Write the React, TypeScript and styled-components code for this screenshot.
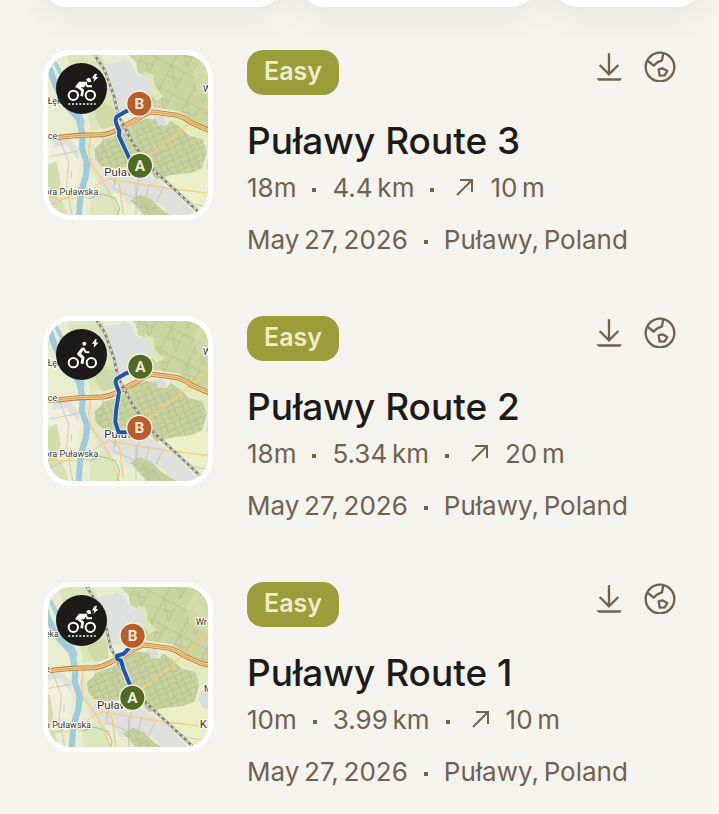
import { useId } from 'react'
import styled, { createGlobalStyle } from 'styled-components'

const GlobalStyle = createGlobalStyle`
  * {
    box-sizing: border-box;
  }

  body {
    margin: 0;
    background: #f4f3ee;
    color: #1c1b19;
    font-family: 'Inter', 'Liberation Sans', sans-serif;
  }
`

const Page = styled.main`
  overflow: hidden;
`

const FilterStrip = styled.div`
  display: flex;
  gap: 18px;
  margin-top: -73px;
  padding: 0 18px 0 43px;
`

const FilterCard = styled.div<{ $grow: number }>`
  flex: ${props => props.$grow} 1 0;
  height: 80px;
  background: white;
  border-radius: 24px;
  box-shadow: 0 8px 32px rgba(60, 65, 35, 0.08);
`

const RouteList = styled.ul`
  display: flex;
  flex-direction: column;
  gap: 51px;
  margin: 0;
  padding: 43px 43px 24px;
  list-style: none;
`

const RouteItem = styled.li`
  display: flex;
  align-items: flex-start;
  gap: 34px;
`

const Thumbnail = styled.div`
  position: relative;
  flex: none;
  width: 170px;
  height: 170px;
  border: 5px solid white;
  border-radius: 28px;
  overflow: hidden;

  > svg {
    display: block;
    width: 100%;
    height: 100%;
  }
`

const SportBadge = styled.div`
  position: absolute;
  top: 8px;
  left: 8px;
  width: 51px;
  height: 51px;
  border-radius: 50%;
  background: #1c1b19;

  svg {
    display: block;
  }
`

const Details = styled.div`
  flex: 1;
  min-width: 0;
`

const TopRow = styled.div`
  display: flex;
  justify-content: space-between;
  align-items: flex-start;
`

const Difficulty = styled.span`
  height: 45px;
  padding: 0 17px;
  border-radius: 16px;
  background: #9d9c3b;
  color: #eeedc6;
  font-size: 25px;
  font-weight: 600;
  line-height: 42px;
`

const Actions = styled.div`
  display: flex;
  gap: 21px;
`

const IconButton = styled.button`
  display: block;
  padding: 0;
  border: 0;
  background: none;
  color: #70624f;
  cursor: pointer;

  svg {
    display: block;
  }
`

const Title = styled.h2`
  margin: 26px 0 0;
  font-size: 37px;
  font-weight: 500;
  line-height: 40px;
`

const Meta = styled.div`
  display: flex;
  align-items: center;
  gap: 16px;
  height: 52px;
  color: #70624f;
  font-size: 26px;
  white-space: nowrap;
`

const Dot = styled.span`
  width: 4px;
  height: 4px;
  margin-top: 6px;
  background: currentColor;
`

type Point = [number, number]
type Sport = 'racebike' | 'citybike'

interface Route {
  name: string
  sport: Sport
  duration: string
  distance: string
  climb: string
  offset: Point
  line: string
  a: Point
  b: Point
}

// Meta texts are set with thin spaces
const thin = (text: string) => text.replace(/ /g, '\u2009')

const routes: Route[] = [
  {
    name: 'Puławy Route 3',
    sport: 'racebike',
    duration: '18m',
    distance: '4.4 km',
    climb: '10 m',
    offset: [0, 0],
    line: 'M300 195 L270 208 L242 224 Q236 232 242 248 L250 266 L249 282 L285 360',
    a: [312, 371],
    b: [310, 185],
  },
  {
    name: 'Puławy Route 2',
    sport: 'citybike',
    duration: '18m',
    distance: '5.34 km',
    climb: '20 m',
    offset: [0, -11],
    line: 'M300 184 L270 196 L242 212 Q236 220 242 234 L249 252 L240 310 L238 342 L248 373 H300',
    a: [313, 176],
    b: [310, 360],
  },
  {
    name: 'Puławy Route 1',
    sport: 'racebike',
    duration: '10m',
    distance: '3.99 km',
    climb: '10 m',
    offset: [-22, 3],
    line: 'M285 216 L264 239 L242 246 L244 255 L255 260 L262 284 L289 350',
    a: [289, 371],
    b: [290, 185],
  },
]

const townForest = 'M176 322 L205 292 L250 276 L300 242 L330 230 L358 232 L366 252 L392 250 L404 236 L432 254 L458 280 L500 292 L512 330 L498 378 L466 392 L400 400 L362 412 L330 378 L296 374 L236 378 L196 372 L178 352 Z'
const northForest = 'M258 20 L600 20 L600 275 L520 268 L474 240 L430 208 L352 196 L342 180 L352 140 L338 104 L306 92 L300 60 Z'
const highway = 'M-20 288 L70 286 L130 280 L198 278 Q222 276 250 260 L310 228 Q330 212 350 210 L425 220 Q446 226 466 242 L520 266 L580 278'
const railway = 'M158 6 L178 42 L206 84 L234 162 L246 218 L292 306 L350 382 L420 446 L490 512 L540 560'

const Marker = ({ at, label, color }: { at: Point; label: string; color: string }) => (
  <g>
    <circle cx={at[0]} cy={at[1]} r="38" fill={color} stroke="#f5f0df" strokeWidth="4" />
    <text x={at[0]} y={at[1] + 16} textAnchor="middle" fontFamily="Roboto, sans-serif" fontSize="46" fontWeight="700" fill="#f3ead8">
      {label}
    </text>
  </g>
)

const RouteMap = ({ route }: { route: Route }) => {
  const id = useId()

  return (
    <svg viewBox="36 39 480 480" role="img" aria-label={`Map of ${route.name}`}>
      <defs>
        <pattern id={`${id}tracks`} width="44" height="36" patternUnits="userSpaceOnUse" patternTransform="rotate(-24)">
          <path d="M0 4 L20 10 L44 4 M10 0 L14 36 M30 0 L34 20 L30 36 M0 24 L44 22" fill="none" stroke="#b0ba8e" strokeWidth="2" />
        </pattern>
        <pattern id={`${id}wide`} width="92" height="74" patternUnits="userSpaceOnUse" patternTransform="rotate(28)">
          <path d="M0 20 L92 20 M24 0 L24 74 M66 20 L66 74 M24 52 L66 44 M24 20 L66 74" fill="none" stroke="#b0bb8c" strokeWidth="2" />
        </pattern>
      </defs>
      <g transform={`translate(${route.offset.join(' ')})`}>
        <rect x="-40" y="-40" width="680" height="680" fill="#e9edcf" />

        {/* fields and woods */}
        <path d="M90 20 L190 20 L222 110 L240 190 L196 258 L164 266 L150 190 L100 80 Z" fill="#dce4b9" />
        <path d="M176 200 L204 184 L236 200 L240 250 L200 262 L178 230 Z" fill="#cfdaa7" />
        <path d="M20 298 L122 290 L134 360 L116 430 L20 430 Z" fill="#f0eedb" />
        <path d="M20 376 L62 358 L74 420 L60 480 L20 470 Z" fill="#d3dcae" />
        <path d="M20 468 L76 470 L110 560 L20 560 Z" fill="#d6e0b4" />
        <path d="M150 300 L174 306 L182 360 L226 396 L200 430 L166 390 Z" fill="#e2e5cb" />
        <path d="M166 452 L222 430 L260 560 L158 560 Z" fill="#dbe6bd" />
        <path d="M370 406 L470 394 L516 372 L600 360 L600 560 L500 540 L400 440 Z" fill="#eceec7" />
        <path d="M430 220 L470 244 L520 272 L600 284 L600 350 L512 330 L488 286 L440 262 L410 236 Z" fill="#e2eab9" />
        <path d={northForest} fill="#cad59f" />
        <path d={northForest} fill={`url(#${id}wide)`} />
        <path d="M506 40 L472 90 L484 150 L540 176 L600 150 L600 40 Z" fill="#d8dfae" opacity="0.6" />
        <path d="M326 90 L352 98 L358 138 L386 164 L360 176 L344 150 Z" fill="#dce8b4" />

        {/* built-up areas */}
        <path d="M206 66 L250 60 L262 50 L286 62 L302 96 L334 106 L350 140 L340 184 L286 206 L250 212 L236 168 L218 112 Z" fill="#dedfdf" />
        <path d="M354 224 L382 222 L390 240 L372 260 L358 246 Z" fill="#dadbdc" />
        <path d="M180 410 L216 384 L304 382 L360 414 L416 450 L500 540 L420 540 L378 492 L330 468 L278 488 L252 456 L200 440 Z" fill="#dfdfdd" />
        <path d="M516 350 L600 340 L600 420 L526 400 L510 378 Z" fill="#d9dadb" />
        <path d="M50 262 L100 292 L130 322 L128 356 L92 310 L50 318 Z" fill="#e0e0dd" />
        <path d={townForest} fill="#c8d39d" />
        <path d={townForest} fill={`url(#${id}tracks)`} />
        <path d="M282 476 L312 458 L346 472 L376 502 L420 530 L330 530 L304 492 Z" fill="#c4d09b" />
        <path d="M282 476 L376 502 L330 530 Z" fill={`url(#${id}tracks)`} />

        {/* river */}
        <path d="M20 50 L44 86 L56 124 L82 180 L128 230 L140 280 L138 320 L152 360 L150 400 L134 450 L126 560" fill="none" stroke="#9dcbdc" strokeWidth="18" />
        <path d="M56 60 L72 90 L110 170 L140 236 L132 290" fill="none" stroke="#a6d0de" strokeWidth="12" />
        <path d="M138 320 L158 372 L142 440 L132 490" fill="none" stroke="#9dcbdc" strokeWidth="11" />
        <path d="M158 470 L196 456 L236 468 L250 498 L244 530" fill="none" stroke="#9ecbcf" strokeWidth="4" />

        {/* local roads */}
        <g fill="none" stroke="#f3cf7b" strokeWidth="4">
          <path d="M164 280 L158 330 L166 370 L196 410 L224 460 L262 560" />
          <path d="M150 470 L184 428 L222 410 L300 424 L390 438 L600 464" />
          <path d="M224 410 L250 428 L262 520" />
          <path d="M330 350 L400 294 L490 220 L600 110" strokeWidth="6" opacity="0.7" />
          <path d="M20 468 L126 470" strokeWidth="3" />
        </g>
        <g fill="none" stroke="#b9bcaa" strokeWidth="2">
          <path d="M70 290 L98 360 L92 430 L112 540" />
          <path d="M40 344 L124 328 M106 388 V410 M40 490 L110 460" />
          <path d="M240 400 L232 440 L300 470 L310 400 M300 424 L300 540 M340 426 L326 480 M380 440 L360 480" />
          <path d="M110 70 L150 130 L202 180 M202 286 L196 350" />
          <path d="M420 450 L470 486 L600 510" />
        </g>

        <path d={highway} fill="none" stroke="#b4783e" strokeWidth="15" />
        <path d={highway} fill="none" stroke="#f7cb85" strokeWidth="10" />
        <path d={highway} fill="none" stroke="#c98d4c" strokeWidth="2" />
        <path d={railway} fill="none" stroke="#84847e" strokeWidth="8" />
        <path d={railway} fill="none" stroke="#e6e5df" strokeWidth="5" strokeDasharray="9 9" />

        <g fontFamily="Roboto, sans-serif" fill="#33332f" stroke="#ffffff" strokeWidth="6" paintOrder="stroke" strokeLinejoin="round">
          <text x="90" y="186" fontSize="26" textAnchor="end">Łęka</text>
          <text x="64" y="291" fontSize="27" textAnchor="end">ce</text>
          <text x="187" y="459" fontSize="27" textAnchor="end">Góra Puławska</text>
          <text x="205" y="402" fontSize="34">Puławy</text>
          <text x="501" y="151" fontSize="28">Wr</text>
          <text x="526" y="350" fontSize="28">M</text>
          <text x="513" y="460" fontSize="34">K</text>
        </g>
      </g>
      <path d={route.line} fill="none" stroke="#e4ecf0" strokeWidth="17" strokeLinejoin="round" />
      <path d={route.line} fill="none" stroke="#1f55ae" strokeWidth="12" strokeLinejoin="round" />
      <Marker at={route.a} label="A" color="#4f6a22" />
      <Marker at={route.b} label="B" color="#b95e2a" />
    </svg>
  )
}

const SportIcon = ({ sport }: { sport: Sport }) => (
  <svg width="51" height="51" viewBox="60 63 153 153" fill="none" stroke="#ffffff" strokeWidth="6" aria-hidden="true">
    {sport === 'racebike' ? (
      <>
        <circle cx="112" cy="160" r="14" />
        <circle cx="163" cy="160" r="14" />
        <path d="M120 135 L130 121 L152 121 L143 134 L130 134 Z" fill="#ffffff" strokeWidth="4" strokeLinejoin="round" />
        <path d="M126 134 L140 145 L137 163" strokeWidth="8" strokeLinejoin="round" />
        <path d="M148 121 L154 133 L168 133" strokeWidth="6" strokeLinejoin="round" />
        <path d="M150 113 Q154 106 163 109 L166 119 L157 121 Z" fill="#ffffff" stroke="none" />
        <path d="M176 96 L168 109 L175 110 L172 120 L187 106 L180 105 L183 95 Z" fill="#ffffff" stroke="none" />
        <path d="M97 186 H179" strokeWidth="5" strokeDasharray="6 5" />
      </>
    ) : (
      <>
        <circle cx="112" cy="164" r="14" />
        <circle cx="166" cy="164" r="14" />
        <circle cx="145" cy="107" r="6" fill="#ffffff" stroke="none" />
        <path d="M141 121 L128 138 L141 149 L138 167" strokeWidth="9" strokeLinejoin="round" />
        <path d="M141 119 L149 132 L160 133" strokeWidth="6" strokeLinejoin="round" />
        <path d="M178 93 L168 107 L175 108 L173 119 L187 104 L180 103 L182 93 Z" fill="#ffffff" stroke="none" />
      </>
    )}
  </svg>
)

const DownloadIcon = () => (
  <svg width="28" height="32" viewBox="45 30 84 96" fill="none" stroke="currentColor" strokeWidth="7" aria-hidden="true">
    <path d="M87 40 V103 M59 75 L87 103 L115 75" />
    <path d="M49 115 H125 L121 122 H56 Z" fill="currentColor" stroke="none" />
  </svg>
)

const GlobeIcon = () => (
  <svg width="32" height="32" viewBox="192 30 96 96" fill="none" stroke="currentColor" strokeWidth="7" strokeLinejoin="round" aria-hidden="true">
    <circle cx="240" cy="81" r="43" />
    <path d="M204 63 L221 77 L232 67 L246 61 L250 40" />
    <path d="M236 88 L247 85 L262 93 L254 106 L239 107 Z" />
  </svg>
)

const ClimbIcon = () => (
  <svg width="24" height="18" viewBox="0 0 24 18" fill="none" stroke="currentColor" strokeWidth="2" role="img" aria-label="Elevation gain">
    <path d="M7 17 L22 2 M10 2 H22 V14" />
  </svg>
)

export default function App() {
  return (
    <>
      <GlobalStyle />
      <Page>
        <FilterStrip>
          <FilterCard $grow={239} />
          <FilterCard $grow={236} />
          <FilterCard $grow={147} />
        </FilterStrip>
        <RouteList>
          {routes.map(route => (
            <RouteItem key={route.name}>
              <Thumbnail>
                <RouteMap route={route} />
                <SportBadge>
                  <SportIcon sport={route.sport} />
                </SportBadge>
              </Thumbnail>
              <Details>
                <TopRow>
                  <Difficulty>Easy</Difficulty>
                  <Actions>
                    <IconButton type="button" aria-label={`Download ${route.name}`}>
                      <DownloadIcon />
                    </IconButton>
                    <IconButton type="button" aria-label="Visibility: public">
                      <GlobeIcon />
                    </IconButton>
                  </Actions>
                </TopRow>
                <Title>{route.name}</Title>
                <Meta>
                  <span>{route.duration}</span>
                  <Dot />
                  <span>{thin(route.distance)}</span>
                  <Dot />
                  <ClimbIcon />
                  <span>{thin(route.climb)}</span>
                </Meta>
                <Meta>
                  <span>{thin('May 27, 2026')}</span>
                  <Dot />
                  <span>{thin('Puławy, Poland')}</span>
                </Meta>
              </Details>
            </RouteItem>
          ))}
        </RouteList>
      </Page>
    </>
  )
}
